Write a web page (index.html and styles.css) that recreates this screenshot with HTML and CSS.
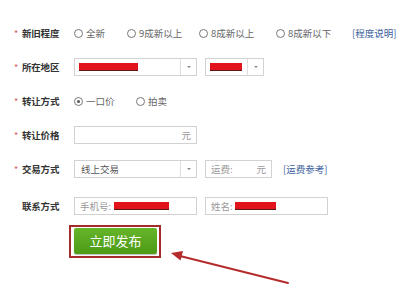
FILE: index.html
```html
<!DOCTYPE html>
<html lang="zh">
<head>
<meta charset="utf-8">
<link rel="stylesheet" href="styles.css">
</head>
<body>
<div class="page">
  <div class="form">
    <div class="row">
      <div class="label"><span class="star">*</span>新旧程度</div>
      <div class="field">
        <span class="opt w1"><span class="radio"></span>全新</span>
        <span class="opt w2"><span class="radio"></span>9成新以上</span>
        <span class="opt w3"><span class="radio"></span>8成新以上</span>
        <span class="opt w4"><span class="radio"></span>8成新以下</span>
        <a class="link">[程度说明]</a>
      </div>
    </div>
    <div class="row">
      <div class="label"><span class="star">*</span>所在地区</div>
      <div class="field gap8">
        <div class="select wide"><span class="val"><span class="redact r1"></span></span><span class="arrow"><i></i></span></div>
        <div class="select narrow"><span class="val"><span class="redact r2"></span></span><span class="arrow"><i></i></span></div>
      </div>
    </div>
    <div class="row">
      <div class="label"><span class="star">*</span>转让方式</div>
      <div class="field">
        <span class="opt w5"><span class="radio on"></span>一口价</span>
        <span class="opt"><span class="radio"></span>拍卖</span>
      </div>
    </div>
    <div class="row">
      <div class="label"><span class="star">*</span>转让价格</div>
      <div class="field">
        <div class="input wide right"><span class="unit">元</span></div>
      </div>
    </div>
    <div class="row">
      <div class="label"><span class="star">*</span>交易方式</div>
      <div class="field gap8">
        <div class="select wide"><span class="val">线上交易</span><span class="arrow"><i></i></span></div>
        <div class="input fee"><span class="ph">运费:</span><span class="unit">元</span></div>
        <a class="link fee-link">[运费参考]</a>
      </div>
    </div>
    <div class="row contact">
      <div class="label"><span class="star blank"></span>联系方式</div>
      <div class="field gap8">
        <div class="input wide"><span class="ph">手机号:</span><span class="redact r3"></span></div>
        <div class="input wide"><span class="ph">姓名:</span><span class="redact r4"></span></div>
      </div>
    </div>
    <div class="row btnrow">
      <div class="label"></div>
      <div class="field">
        <div class="btn-frame"><button class="btn">立即发布</button></div>
      </div>
    </div>
  </div>
  <svg class="annot" width="415" height="306" viewBox="0 0 415 306">
    <line x1="288" y1="283" x2="180" y2="256" stroke="#b52a2a" stroke-width="2" stroke-linecap="round"/>
    <polygon points="171,253 180.5,260.5 183,251" fill="#b52a2a"/>
  </svg>
</div>
</body>
</html>
```

FILE: styles.css
```css
html, body {
  margin: 0;
  padding: 0;
  background: #fff;
}
.page {
  position: relative;
  width: 415px;
  height: 306px;
  overflow: hidden;
  font-family: "Noto Sans CJK SC", "Noto Sans", sans-serif;
  font-size: 9.5px;
  color: #666;
}
.form {
  padding-top: 16px;
  display: flex;
  flex-direction: column;
}
.row {
  display: grid;
  grid-template-columns: 74px 1fr;
  height: 34px;
  align-items: center;
}
.row.contact {
  margin-top: 3px;
}
.row.btnrow {
  height: 36px;
}
.label {
  padding-left: 14px;
  display: flex;
  align-items: center;
  font-weight: 700;
  color: #333;
  font-size: 9.5px;
  letter-spacing: -0.2px;
}
.star {
  width: 8px;
  color: #d06060;
  font-weight: 400;
  font-size: 9px;
}
.field {
  display: flex;
  align-items: center;
}
.gap8 {
  gap: 8px;
}
.opt {
  display: inline-flex;
  align-items: center;
  gap: 3px;
  color: #666;
}
.w1 { width: 53px; }
.w2 { width: 72px; }
.w3 { width: 77px; }
.w4 { width: 76px; }
.w5 { width: 62px; }
.radio {
  width: 9px;
  height: 9px;
  box-sizing: border-box;
  border: 1px solid #777;
  border-radius: 50%;
  display: inline-flex;
  align-items: center;
  justify-content: center;
  margin-right: 0;
}
.radio.on::after {
  content: "";
  width: 3px;
  height: 3px;
  border-radius: 50%;
  background: #555;
}
.link {
  color: #3d5f9c;
}
.fee-link {
  margin-left: 3px;
}
.select, .input {
  height: 18px;
  box-sizing: border-box;
  border: 1px solid #d2d2d2;
  background: #fff;
  display: flex;
  align-items: center;
}
.wide { width: 123px; }
.narrow { width: 59px; }
.fee { width: 67px; }
.select .val {
  flex: 1;
  padding-left: 6px;
  color: #555;
  display: flex;
  align-items: center;
}
.select .arrow {
  width: 15px;
  align-self: stretch;
  border-left: 1px solid #dedede;
  display: flex;
  align-items: center;
  justify-content: center;
}
.select .arrow i {
  width: 0;
  height: 0;
  border-left: 2px solid transparent;
  border-right: 2px solid transparent;
  border-top: 2px solid #888;
}
.input {
  padding: 0 5px;
}
.input.right {
  justify-content: flex-end;
}
.ph {
  color: #999;
}
.unit {
  color: #999;
  margin-left: auto;
}
.redact {
  display: inline-block;
  height: 7px;
  background: #e0141a;
  border-bottom: 1px solid #5a1a1a;
}
.r1 { width: 59px; margin-left: -2px; }
.r2 { width: 32px; margin-left: -2px; }
.r3 { width: 55px; margin-left: 3px; }
.r4 { width: 41px; margin-left: 2px; }
.btn-frame {
  margin-left: -5px;
  width: 92px;
  height: 33px;
  box-sizing: border-box;
  border: 2px solid #a52a2a;
  padding: 1px 2px 2px 3px;
  display: flex;
}
.btn {
  flex: 1;
  border: 0;
  border-radius: 2px;
  background: linear-gradient(#66b52a, #4d9a16);
  color: #fff;
  font-family: "Noto Sans CJK SC", sans-serif;
  font-size: 13px;
  padding: 0;
  box-shadow: 0 1px 1px rgba(0,0,0,0.25);
}
.annot {
  position: absolute;
  left: 0;
  top: 0;
  pointer-events: none;
}
```
